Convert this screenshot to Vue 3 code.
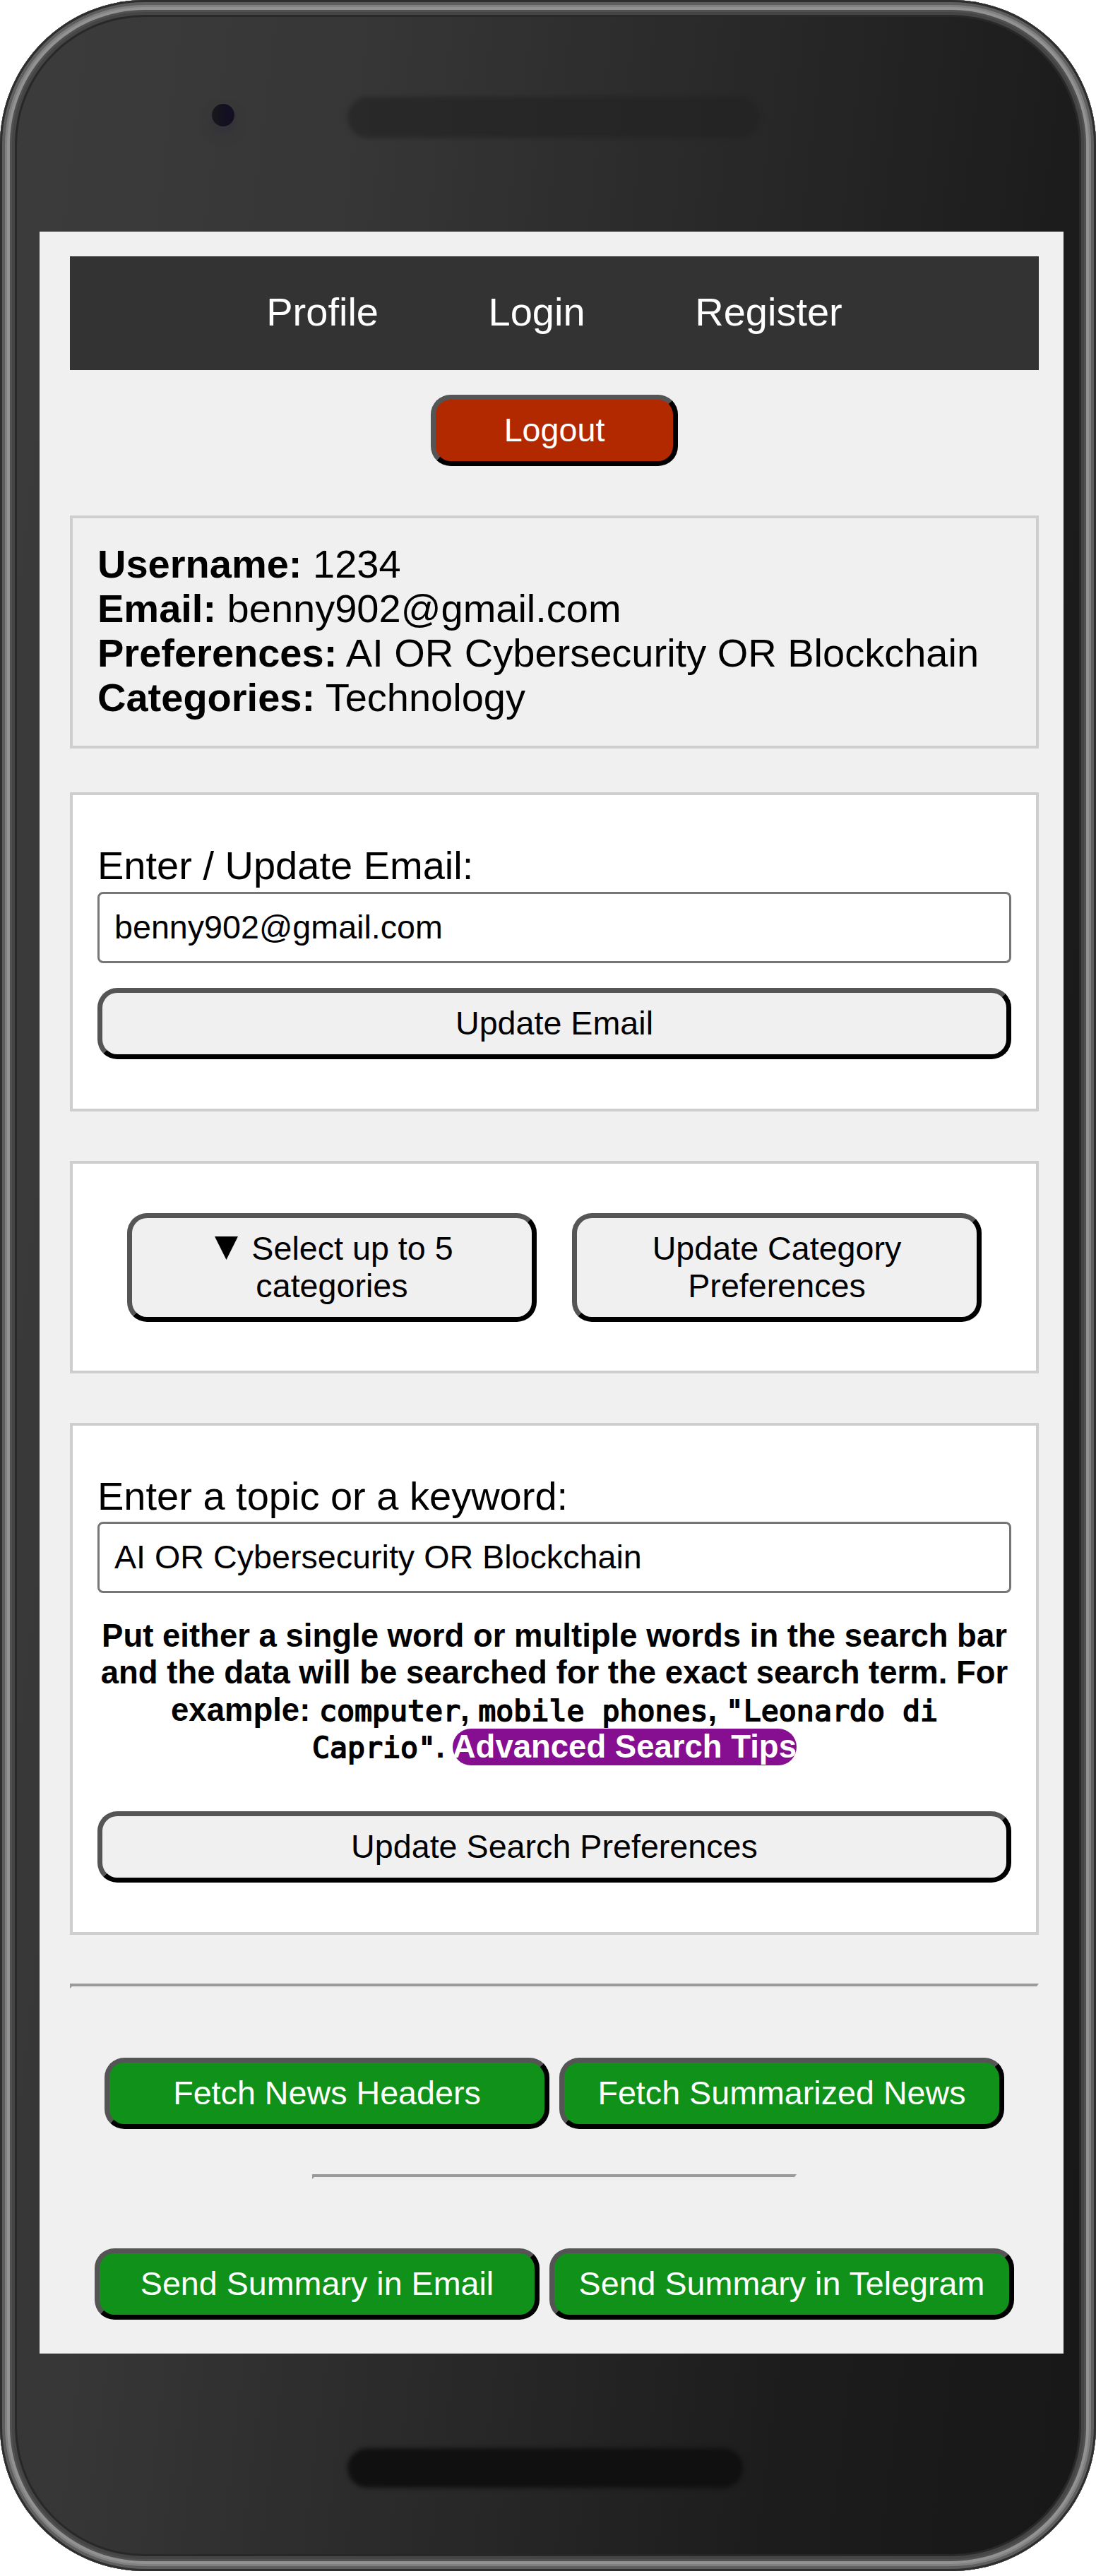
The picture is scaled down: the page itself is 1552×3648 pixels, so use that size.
<script setup>
import { ref } from 'vue'

const links = ['Profile', 'Login', 'Register']
const profile = [
  { label: 'Username:', value: '1234' },
  { label: 'Email:', value: 'benny902@gmail.com' },
  { label: 'Preferences:', value: 'AI OR Cybersecurity OR Blockchain' },
  { label: 'Categories:', value: 'Technology' },
]
const email = ref('benny902@gmail.com')
const topic = ref('AI OR Cybersecurity OR Blockchain')
</script>

<template>
  <div class="device">
    <div class="forehead">
      <span class="camera"></span>
      <span class="speaker"></span>
    </div>

    <main class="screen">
      <nav class="nav">
        <a v-for="link in links" :key="link">{{ link }}</a>
      </nav>

      <button class="btn logout">Logout</button>

      <section class="panel info">
        <div v-for="row in profile" :key="row.label"><b>{{ row.label }}</b> {{ row.value }}</div>
      </section>

      <section class="panel form email">
        <label for="email">Enter / Update Email:</label>
        <input id="email" v-model="email" type="text" />
        <button class="btn wide">Update Email</button>
      </section>

      <section class="panel categories">
        <button class="btn half">
          <svg class="caret" viewBox="0 0 33 33"><path d="M0 0H33L16.5 33Z" /></svg> Select up to 5<br />categories
        </button>
        <button class="btn half">Update Category<br />Preferences</button>
      </section>

      <section class="panel form topic">
        <label for="topic">Enter a topic or a keyword:</label>
        <input id="topic" v-model="topic" type="text" />
        <p class="hint">
          <span class="line">Put either a single word or multiple words in the search bar</span>
          <span class="line">and the data will be searched for the exact search term. For</span>
          <span class="line">example: <code>computer</code>, <code>mobile phones</code>, <code>"Leonardo di</code></span>
          <span class="line"><code>Caprio"</code>. <a class="tips">Advanced Search Tips</a></span>
        </p>
        <button class="btn wide">Update Search Preferences</button>
      </section>

      <hr class="rule" />
      <div class="actions">
        <button class="btn go">Fetch News Headers</button>
        <button class="btn go">Fetch Summarized News</button>
      </div>
      <hr class="rule short" />
      <div class="actions">
        <button class="btn go">Send Summary in Email</button>
        <button class="btn go long">Send Summary in Telegram</button>
      </div>
    </main>

    <div class="chin">
      <span class="home"></span>
    </div>
  </div>
</template>

<style>
body {
  background: #fff;
}
</style>

<style scoped>
.device {
  box-sizing: border-box;
  width: 1552px;
  height: 3641px;
  border-radius: 205px;
  background: linear-gradient(97deg, #3b3b3b 5%, #363636 27%, #2f2f2f 40%, #252525 60%, #1c1c1c 77%, #181818 96%);
  box-shadow:
    inset 0 0 0 3px #2e2e2e,
    inset 0 0 0 7px #5e5e5e,
    inset 0 0 0 10px #808080,
    inset 0 0 0 14px #929292,
    inset 0 0 0 17px #505050,
    inset 0 0 0 21px #454545,
    inset 0 0 0 24px #282828;
  font-family: "Liberation Sans", Arial, sans-serif;
  font-size: 56px;
  line-height: 63px;
  color: #000;
}
.forehead {
  box-sizing: border-box;
  height: 328px;
  padding: 137px 0 0 300px;
  display: flex;
  align-items: flex-start;
}
.camera {
  width: 32px;
  height: 32px;
  margin: 10px 160px 0 0;
  border-radius: 50%;
  background: linear-gradient(90deg, #19181c, #141022 60%);
  box-shadow: 0 10px 16px rgba(45, 45, 60, 0.5);
}
.speaker {
  width: 584px;
  height: 58px;
  border-radius: 29px;
  background: linear-gradient(90deg, #292929, #242424);
  filter: blur(3px);
}
.screen {
  box-sizing: border-box;
  width: 1450px;
  height: 3005px;
  margin-left: 56px;
  padding: 35px 35px 0 43px;
  background: #f0f0f0;
  display: flex;
  flex-direction: column;
  align-items: center;
}
.nav {
  box-sizing: border-box;
  width: 100%;
  height: 161px;
  padding-bottom: 4px;
  background: #333;
  color: #fff;
  display: flex;
  justify-content: center;
  align-items: center;
  gap: 155.6px;
}
.btn {
  box-sizing: border-box;
  height: 101px;
  padding: 0;
  border: 7px solid;
  border-color: #555 #000 #000 #555;
  border-radius: 28px;
  background: #f0f0f0;
  color: #000;
  font-family: inherit;
  font-size: 46.67px;
  line-height: 52.8px;
  white-space: nowrap;
}
.logout {
  width: 350px;
  margin-top: 35px;
  background: #b22900;
  color: #fff;
}
.panel {
  box-sizing: border-box;
  width: 100%;
  border: 4px solid #cecece;
}
.info {
  height: 330px;
  margin-top: 70px;
  padding: 33px 35px;
  white-space: nowrap;
}
.form {
  padding: 68px 35px 0;
  background: #fff;
  display: flex;
  flex-direction: column;
}
.form input {
  box-sizing: border-box;
  height: 101px;
  margin: 6px 0 0;
  padding: 0 20px 1px 21px;
  border: 3px solid #767676;
  border-radius: 8px;
  background: #fff;
  color: #000;
  font-family: inherit;
  font-size: 46.67px;
  outline: none;
}
.email {
  height: 452px;
  margin-top: 62px;
}
.email .wide {
  margin-top: 35px;
}
.categories {
  height: 301px;
  margin-top: 70px;
  padding-top: 70px;
  background: #fff;
  display: flex;
  justify-content: center;
  gap: 50px;
}
.half {
  width: 580px;
  height: 154px;
}
.caret {
  width: 33px;
  height: 33px;
  margin: 0 6px;
}
.topic {
  height: 725px;
  margin-top: 70px;
}
.topic input {
  margin-top: 5px;
}
.topic .wide {
  margin-top: 65px;
}
.hint {
  margin: 35px 0 0;
  font-size: 45.5px;
  font-weight: bold;
  line-height: 52.3px;
  text-align: center;
  white-space: nowrap;
}
.line {
  display: block;
  height: 52.3px;
}
.line code {
  font-family: "DejaVu Sans Mono", monospace;
  font-size: 41.56px;
  font-weight: normal;
  -webkit-text-stroke: 1.8px #000;
}
.tips {
  padding-bottom: 1px;
  border-radius: 28px;
  background: #860e90;
  color: #fff;
}
.rule {
  box-sizing: border-box;
  flex: none;
  width: 100%;
  height: 7px;
  margin: 69px 0 0;
  border: solid;
  border-width: 4px 3px 3px;
  border-color: #9a9a9a #eee #eee #9a9a9a;
}
.rule.short {
  width: 686px;
  margin-top: 64px;
}
.actions {
  display: flex;
  gap: 14px;
  margin-top: 98px;
}
.go {
  width: 630px;
  background: #10911a;
  color: #fff;
}
.go.long {
  width: 658px;
}
.chin {
  box-sizing: border-box;
  height: 308px;
  padding: 134px 0 0 492px;
}
.home {
  display: block;
  width: 560px;
  height: 56px;
  border-radius: 28px;
  background: #101010;
  filter: blur(3px);
}
</style>
